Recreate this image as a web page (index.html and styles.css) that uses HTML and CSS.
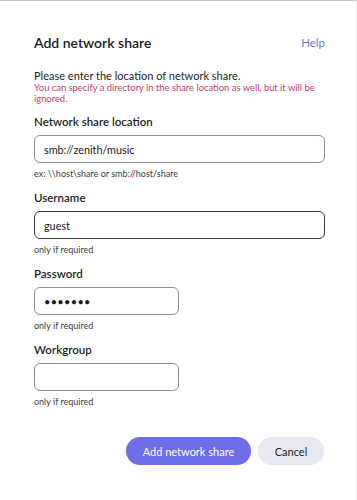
FILE: index.html
```html
<!DOCTYPE html>
<html lang="en">

<head>
    <meta charset="UTF-8">
    <meta name="viewport" content="width=device-width, initial-scale=1.0">
    <title>Add network share</title>
    <link rel="stylesheet" href="styles.css">
</head>

<body>
    <div class="dialog">
        <div class="dialog__header">
            <h1 class="dialog__title">Add network share</h1>
            <a class="dialog__help" href="#">Help</a>
        </div>

        <p class="intro">Please enter the location of network share.</p>
        <p class="warning">You can specify a directory in the share location as well, but it will be ignored.</p>

        <!-- Campos -->
        <div class="field">
            <label class="field__label">Network share location</label>
            <input class="field__input" type="text" value="smb://zenith/music">
            <div class="field__hint">ex: \\host\share or smb://host/share</div>
        </div>

        <div class="field">
            <label class="field__label">Username</label>
            <input class="field__input field__input--focus" type="text" value="guest">
            <div class="field__hint">only if required</div>
        </div>

        <div class="field">
            <label class="field__label">Password</label>
            <input class="field__input field__input--short" type="password" value="guest12">
            <div class="field__hint">only if required</div>
        </div>

        <div class="field">
            <label class="field__label">Workgroup</label>
            <input class="field__input field__input--short" type="text" value="">
            <div class="field__hint">only if required</div>
        </div>

        <div class="dialog__actions">
            <button class="btn btn--primary">Add network share</button>
            <button class="btn btn--secondary">Cancel</button>
        </div>
    </div>
</body>

</html>
```

FILE: styles.css
```css
/* Estilos generales */
body {
    margin: 0;
    background: #fff;
    font-family: Lato, "Noto Sans", sans-serif;
    color: #1f1f1f;
    border-top: 1px solid #c8c8c8;
    border-right: 1px solid #ececec;
    height: 499px;
    overflow: hidden;
}

.dialog {
    padding: 32px 31px 0 34px;
}

.dialog__header {
    display: flex;
    justify-content: space-between;
    align-items: center;
    height: 20px;
}

.dialog__title {
    margin: 0;
    font-size: 14px;
    line-height: 20px;
    font-weight: 600;
    color: #1a1a1a;
}

.dialog__help {
    color: #7377d6;
    text-decoration: none;
    font-size: 11.5px;
    line-height: 20px;
}

.intro {
    margin: 16px 0 0;
    font-size: 11px;
    line-height: 13px;
    color: #262626;
}

.warning {
    margin: 0;
    font-size: 9.4px;
    line-height: 11px;
    color: #c2416b;
}

/* Campos */
.field {
    display: flex;
    flex-direction: column;
    margin-top: 10px;
}

.field__label {
    font-size: 11.5px;
    font-weight: 600;
    color: #1f1f1f;
    line-height: 16px;
    margin-bottom: 5px;
}

.field__input {
    box-sizing: border-box;
    width: 100%;
    height: 28px;
    padding: 0 9px;
    border: 1px solid #8f8f8f;
    border-radius: 6px;
    font-family: Lato, "Noto Sans", sans-serif;
    font-size: 10.8px;
    color: #1a1a1a;
    background: #fff;
    outline: none;
}

.field__input--focus {
    border-color: #3a3a3a;
}

.field__input--short {
    width: 145px;
}

.field__input[type="password"] {
    font-size: 11px;
    letter-spacing: 0.3px;
}

.field__hint {
    margin-top: 5px;
    font-size: 9px;
    line-height: 12px;
    color: #3e3e3e;
}

/* Botones */
.dialog__actions {
    display: flex;
    justify-content: flex-end;
    gap: 7px;
    margin-top: 29px;
    padding-right: 1px;
}

.btn {
    height: 28px;
    border: none;
    border-radius: 14px;
    font-family: Lato, "Noto Sans", sans-serif;
    font-size: 11px;
    cursor: pointer;
    padding: 0;
}

.btn--primary {
    width: 125px;
    background: #6e6ee9;
    color: #fff;
}

.btn--secondary {
    width: 66px;
    background: #e6e9f0;
    color: #262626;
}
```
